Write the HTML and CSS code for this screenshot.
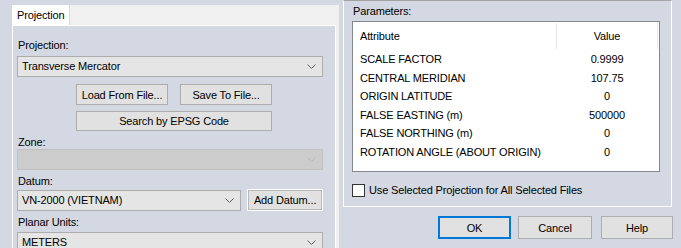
FILE: index.html
```html
<!DOCTYPE html>
<html lang="en">
<head>
  <meta charset="UTF-8">
  <title>Projection</title>
  <link rel="stylesheet" href="styles.css">
</head>
<body>
  <div class="window">
    <div class="tabs">
      <div class="tab-strip"><span class="tab">Projection</span></div>
      <div class="tab-page">
        <div class="caption first">Projection:</div>
        <div class="combo">
          <span>Transverse Mercator</span>
          <svg class="chevron" width="9" height="5" viewBox="0 0 9 5"><path d="M0.5 0.5 L4.5 4.5 L8.5 0.5"/></svg>
        </div>
        <div class="file-row">
          <button class="btn file-btn">Load From File...</button>
          <button class="btn file-btn">Save To File...</button>
        </div>
        <button class="btn epsg">Search by EPSG Code</button>

        <div class="caption">Zone:</div>
        <div class="combo disabled">
          <span></span>
          <svg class="chevron" width="9" height="5" viewBox="0 0 9 5"><path d="M0.5 0.5 L4.5 4.5 L8.5 0.5"/></svg>
        </div>

        <div class="caption">Datum:</div>
        <div class="datum-row">
          <div class="combo datum">
            <span>VN-2000 (VIETNAM)</span>
            <svg class="chevron" width="9" height="5" viewBox="0 0 9 5"><path d="M0.5 0.5 L4.5 4.5 L8.5 0.5"/></svg>
          </div>
          <button class="btn add-datum">Add Datum...</button>
        </div>

        <div class="caption units">Planar Units:</div>
        <div class="combo">
          <span>METERS</span>
          <svg class="chevron" width="9" height="5" viewBox="0 0 9 5"><path d="M0.5 0.5 L4.5 4.5 L8.5 0.5"/></svg>
        </div>
      </div>
    </div>

    <div class="side">
      <div class="group">
        <div class="params-label">Parameters:</div>
        <div class="list">
          <div class="list-head">
            <div class="head-cell">Attribute</div>
            <div class="head-cell value">Value</div>
          </div>
          <div class="row"><span>SCALE FACTOR</span><span class="value">0.9999</span></div>
          <div class="row"><span>CENTRAL MERIDIAN</span><span class="value">107.75</span></div>
          <div class="row"><span>ORIGIN LATITUDE</span><span class="value">0</span></div>
          <div class="row"><span>FALSE EASTING (m)</span><span class="value">500000</span></div>
          <div class="row"><span>FALSE NORTHING (m)</span><span class="value">0</span></div>
          <div class="row"><span>ROTATION ANGLE (ABOUT ORIGIN)</span><span class="value">0</span></div>
        </div>
        <div class="check-row">
          <span class="checkbox"></span>
          <span>Use Selected Projection for All Selected Files</span>
        </div>
      </div>
      <div class="dialog-buttons">
        <button class="btn ok">OK</button>
        <button class="btn cancel">Cancel</button>
        <button class="btn help">Help</button>
      </div>
    </div>
  </div>
</body>
</html>
```

FILE: styles.css
```css
body {
  margin: 0;
  background: #d3d8e2;
  font-family: "Liberation Sans", Arial, sans-serif;
  font-size: 11px;
  letter-spacing: -0.15px;
  color: #000;
  overflow: hidden;
  white-space: nowrap;
}
.window {
  display: flex;
  align-items: flex-start;
  height: 248px;
}

/* left: tab control */
.tabs {
  margin: 5px 0 0 12px;
  width: 327px;
  background: #f0f0f0;
}
.tab-strip {
  height: 20px;
  display: flex;
}
.tab {
  width: 58px;
  background: #fff;
  border-right: 1px solid #dadada;
  box-sizing: border-box;
  padding-left: 5px;
  line-height: 20px;
}
.tab-page {
  width: 324px;
  box-sizing: border-box;
  border: 1px solid #fff;
  background: #d3d8e2;
  padding: 0 12px 0 4px;
  height: 230px;
}
.caption {
  line-height: 14px;
  margin-top: 4px;
  padding-left: 1px;
}
.caption.first {
  margin-top: 12px;
  margin-bottom: 4px;
}
.caption.units {
  margin-bottom: 3px;
}
.combo {
  height: 21px;
  box-sizing: border-box;
  border: 1px solid #adadad;
  background: #e5e5e5;
  display: flex;
  align-items: center;
  justify-content: space-between;
  padding: 0 6px 0 4px;
  line-height: 19px;
}
.combo .chevron path {
  fill: none;
  stroke: #606060;
}
.combo.disabled {
  background: #cccccc;
  border-color: #c2c2c2;
}
.combo.disabled .chevron path {
  stroke: #b8b8b8;
}
.btn {
  font: inherit;
  letter-spacing: inherit;
  color: #000;
  background: #e1e1e1;
  border: 1px solid #adadad;
  padding: 0;
  margin: 0;
  box-sizing: border-box;
  white-space: nowrap;
}
.file-row {
  display: flex;
  gap: 12px;
  margin: 7px 0 0 59px;
}
.file-btn {
  width: 92px;
  height: 21px;
}
.epsg {
  display: block;
  width: 196px;
  height: 20px;
  margin: 6px 0 0 59px;
}
.caption + .combo.disabled {
  margin-bottom: 2px;
}
.datum-row {
  display: flex;
  align-items: flex-start;
  gap: 6px;
  margin-top: 1px;
}
.combo.datum {
  width: 225px;
  margin-top: 1px;
}
.add-datum {
  width: 76px;
  height: 22px;
  border-color: #fdfdfd;
  box-shadow: inset 0 0 0 1px #b9b9b9;
}

/* right: parameters group */
.side {
  margin-left: 4px;
  width: 330px;
}
.group {
  width: 329px;
  height: 207px;
  box-sizing: border-box;
  border: 1px solid #fff;
  border-top-color: #a3a3a3;
  padding: 3px 11px 0 8px;
}
.params-label {
  line-height: 14px;
  padding-left: 1px;
  margin-bottom: 3px;
}
.list {
  height: 151px;
  box-sizing: border-box;
  border: 1px solid #828790;
  background: #fff;
}
.list-head {
  display: grid;
  grid-template-columns: 204px 101px;
  height: 28px;
}
.head-cell {
  margin-top: 1px;
  height: 26px;
  line-height: 26px;
  border-right: 1px solid #e5e5e5;
  padding-left: 7px;
}
.row {
  display: grid;
  grid-template-columns: 204px 100px;
  height: 18.6px;
  line-height: 18.6px;
}
.row span:first-child {
  padding-left: 7px;
}
.value {
  text-align: center;
  padding-left: 0 !important;
}
.check-row {
  display: flex;
  align-items: center;
  gap: 4px;
  margin-top: 11px;
  line-height: 14px;
}
.checkbox {
  width: 13px;
  height: 13px;
  box-sizing: border-box;
  border: 1px solid #333;
  background: #fff;
}
.dialog-buttons {
  display: flex;
  justify-content: flex-end;
  margin-top: 9px;
}
.dialog-buttons .btn {
  height: 23px;
}
.ok {
  width: 73px;
  border: 2px solid #0078d7;
}
.cancel {
  width: 74px;
  margin-left: 7px;
}
.help {
  width: 72px;
  margin-left: 9px;
}
```
